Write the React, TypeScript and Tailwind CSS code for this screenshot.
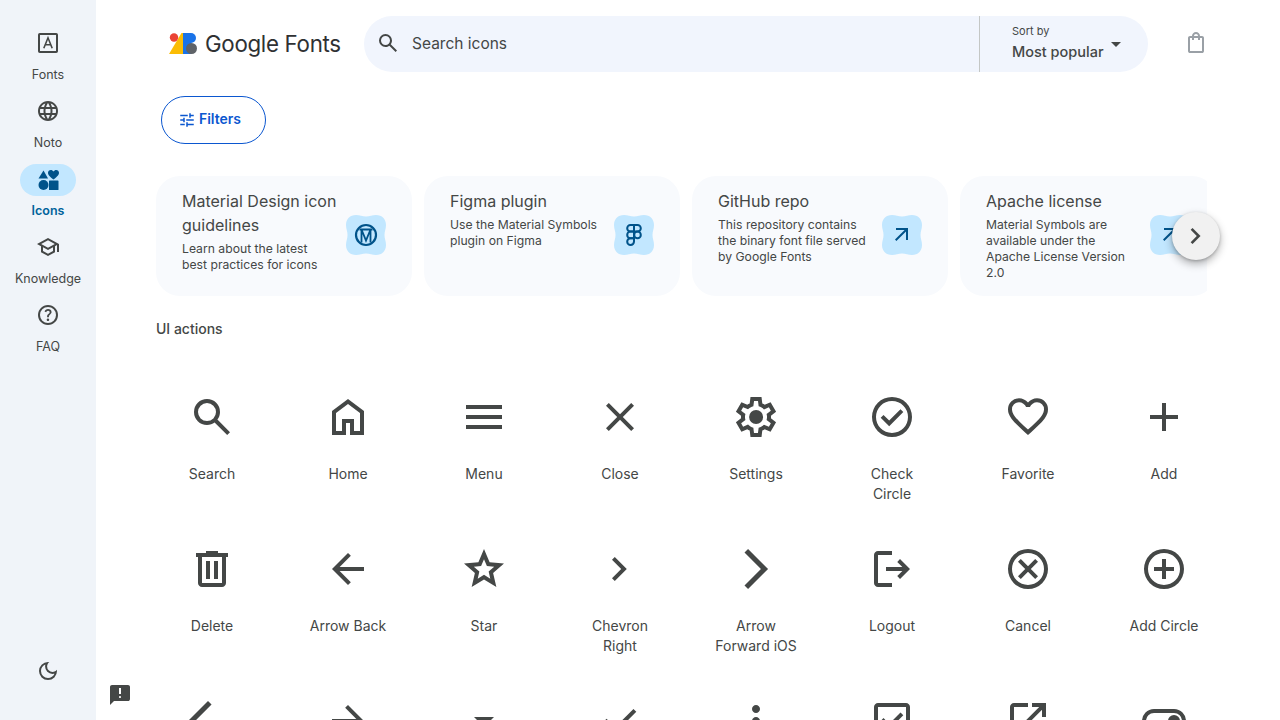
import React from "react";

const paths: Record<string, string> = {
  search: "M784-120 532-372q-30 24-69 38t-83 14q-109 0-184.5-75.5T120-580q0-109 75.5-184.5T380-840q109 0 184.5 75.5T640-580q0 44-14 83t-38 69l252 252-56 56ZM380-400q75 0 127.5-52.5T560-580q0-75-52.5-127.5T380-760q-75 0-127.5 52.5T200-580q0 75 52.5 127.5T380-400Z",
  home: "M240-200h120v-240h240v240h120v-360L480-740 240-560v360Zm-80 80v-480l320-240 320 240v480H520v-240h-80v240H160Z",
  menu: "M120-240v-80h720v80H120Zm0-200v-80h720v80H120Zm0-200v-80h720v80H120Z",
  close: "m256-200-56-56 224-224-224-224 56-56 224 224 224-224 56 56-224 224 224 224-56 56-224-224-224 224Z",
  settings: "m370-80-16-128q-13-5-24.5-12T307-235l-119 50L78-375l103-78q-1-7-1-13.5v-27q0-6.5 1-13.5L78-585l110-190 119 50q11-8 23-15t24-12l16-128h220l16 128q13 5 24.5 12t22.5 15l119-50 110 190-103 78q1 7 1 13.5v27q0 6.5-2 13.5l103 78-110 190-118-50q-11 8-23 15t-24 12L590-80H370Zm70-80h79l14-106q31-8 57.5-23.5T639-327l99 41 39-68-86-65q5-14 7-29.5t2-31.5q0-16-2-31.5t-7-29.5l86-65-39-68-99 42q-22-23-48.5-38.5T533-694l-13-106h-79l-14 106q-31 8-57.5 23.5T321-633l-99-41-39 68 86 64q-5 15-7 30t-2 32q0 16 2 31t7 30l-86 65 39 68 99-42q22 23 48.5 38.5T427-266l13 106Zm42-180q58 0 99-41t41-99q0-58-41-99t-99-41q-59 0-99.5 41T342-480q0 58 40.5 99t99.5 41Z",
  checkCircle: "m424-296 282-282-56-56-226 226-114-114-56 56 170 170Zm56 216q-83 0-156-31.5T197-197q-54-54-85.5-127T80-480q0-83 31.5-156T197-763q54-54 127-85.5T480-880q83 0 156 31.5T763-763q54 54 85.5 127T880-480q0 83-31.5 156T763-197q-54 54-127 85.5T480-80Zm0-80q134 0 227-93t93-227q0-134-93-227t-227-93q-134 0-227 93t-93 227q0 134 93 227t227 93Z",
  favorite: "m480-120-58-52q-101-91-167-157T150-447.5Q111-500 95.5-544T80-634q0-94 63-157t157-63q52 0 99 22t81 62q34-40 81-62t99-22q94 0 157 63t63 157q0 46-15.5 90T810-447.5Q771-395 705-329T538-172l-58 52Zm0-108q96-86 158-147.5t98-107q36-45.5 50-81t14-70.5q0-60-40-100t-100-40q-47 0-87 26.5T518-680h-76q-15-41-55-67.5T300-774q-60 0-100 40t-40 100q0 35 14 70.5t50 81q36 45.5 98 107T480-228Z",
  add: "M440-440H200v-80h240v-240h80v240h240v80H520v240h-80v-240Z",
  delete: "M280-120q-33 0-56.5-23.5T200-200v-520h-40v-80h200v-40h240v40h200v80h-40v520q0 33-23.5 56.5T680-120H280Zm400-600H280v520h400v-520ZM360-280h80v-360h-80v360Zm160 0h80v-360h-80v360Z",
  arrowBack: "m313-440 224 224-57 56-320-320 320-320 57 56-224 224h487v80H313Z",
  star: "m354-287 126-76 126 77-33-144 111-96-146-13-58-136-58 135-146 13 111 97-33 143ZM233-120l65-281L80-590l288-25 112-265 112 265 288 25-218 189 65 281-247-149-247 149Z",
  chevronRight: "M504-480 320-664l56-56 240 240-240 240-56-56 184-184Z",
  arrowForwardIos: "m321-80-71-71 329-329-329-329 71-71 400 400L321-80Z",
  logout: "M200-120q-33 0-56.5-23.5T120-200v-560q0-33 23.5-56.5T200-840h280v80H200v560h280v80H200Zm440-160-55-58 102-102H360v-80h327L585-622l55-58 200 200-200 200Z",
  cancel: "m336-280 144-144 144 144 56-56-144-144 144-144-56-56-144 144-144-144-56 56 144 144-144 144 56 56ZM480-80q-83 0-156-31.5T197-197q-54-54-85.5-127T80-480q0-83 31.5-156T197-763q54-54 127-85.5T480-880q83 0 156 31.5T763-763q54 54 85.5 127T880-480q0 83-31.5 156T763-197q-54 54-127 85.5T480-80Zm0-80q134 0 227-93t93-227q0-134-93-227t-227-93q-134 0-227 93t-93 227q0 134 93 227t227 93Z",
  addCircle: "M440-280h80v-160h160v-80H520v-160h-80v160H280v80h160v160Zm40 200q-83 0-156-31.5T197-197q-54-54-85.5-127T80-480q0-83 31.5-156T197-763q54-54 127-85.5T480-880q83 0 156 31.5T763-763q54 54 85.5 127T880-480q0 83-31.5 156T763-197q-54 54-127 85.5T480-80Zm0-80q134 0 227-93t93-227q0-134-93-227t-227-93q-134 0-227 93t-93 227q0 134 93 227t227 93Z",
  arrowBackIos: "M400-80 0-480l400-400 71 71-329 329 329 329-71 71Z",
  arrowForward: "M647-440H160v-80h487L423-744l57-56 320 320-320 320-57-56 224-224Z",
  arrowDrop: "M480-360 280-560h400L480-360Z",
  done: "M382-240 154-468l57-57 171 171 367-367 57 57-424 424Z",
  moreVert: "M480-160q-33 0-56.5-23.5T400-240q0-33 23.5-56.5T480-320q33 0 56.5 23.5T560-240q0 33-23.5 56.5T480-160Zm0-240q-33 0-56.5-23.5T400-480q0-33 23.5-56.5T480-560q33 0 56.5 23.5T560-480q0 33-23.5 56.5T480-400Zm0-240q-33 0-56.5-23.5T400-720q0-33 23.5-56.5T480-800q33 0 56.5 23.5T560-720q0 33-23.5 56.5T480-640Z",
  checkBox: "m424-312 282-282-56-56-226 226-114-114-56 56 170 170ZM200-120q-33 0-56.5-23.5T120-200v-560q0-33 23.5-56.5T200-840h560q33 0 56.5 23.5T840-760v560q0 33-23.5 56.5T760-120H200Zm0-80h560v-560H200v560Z",
  openInNew: "M200-120q-33 0-56.5-23.5T120-200v-560q0-33 23.5-56.5T200-840h280v80H200v560h560v-280h80v280q0 33-23.5 56.5T760-120H200Zm188-212-56-56 372-372H560v-80h280v280h-80v-144L388-332Z",
  toggleOn: "M280-240q-100 0-170-70T40-480q0-100 70-170t170-70h400q100 0 170 70t70 170q0 100-70 170t-170 70H280Zm0-80h400q66 0 113-47t47-113q0-66-47-113t-113-47H280q-66 0-113 47t-47 113q0 66 47 113t113 47Zm400-40q50 0 85-35t35-85q0-50-35-85t-85-35q-50 0-85 35t-35 85q0 50 35 85t85 35Z",
  language: "M480-80q-82 0-155-31.5t-127.5-86Q143-252 111.5-325T80-480q0-83 31.5-155.5t86-127Q252-817 325-848.5T480-880q83 0 155.5 31.5t127 86q54.5 54.5 86 127T880-480q0 82-31.5 155t-86 127.5q-54.5 54.5-127 86T480-80Zm0-82q26-36 45-75t31-83H404q12 44 31 83t45 75Zm-104-16q-18-33-31.5-68.5T322-320H204q29 50 72.5 87t99.5 55Zm208 0q56-18 99.5-55t72.5-87H638q-9 38-22.5 73.5T584-178ZM170-400h136q-3-20-4.5-39.5T300-480q0-21 1.5-40.5T306-560H170q-5 20-7.5 39.5T160-480q0 21 2.5 40.5T170-400Zm216 0h188q3-20 4.5-39.5T580-480q0-21-1.5-40.5T574-560H386q-3 20-4.5 39.5T380-480q0 21 1.5 40.5T386-400Zm268 0h136q5-20 7.5-39.5T800-480q0-21-2.5-40.5T790-560H654q3 20 4.5 39.5T660-480q0 21-1.5 40.5T654-400Zm-16-240h118q-29-50-72.5-87T584-782q18 33 31.5 68.5T638-640Zm-234 0h152q-12-44-31-83t-45-75q-26 36-45 75t-31 83Zm-200 0h118q9-38 22.5-73.5T376-782q-56 18-99.5 55T204-640Z",
  school: "M480-120 200-272v-240L40-600l440-240 440 240v320h-80v-276l-80 44v240L480-120Zm0-332 274-148-274-148-274 148 274 148Zm0 241 200-108v-151L480-360 280-470v151l200 108Z",
  help: "M478-240q21 0 35.5-14.5T528-290q0-21-14.5-35.5T478-340q-21 0-35.5 14.5T428-290q0 21 14.5 35.5T478-240Zm-36-154h74q0-33 7.5-52t42.5-52q26-26 41-49.5t15-56.5q0-56-41-86t-97-30q-57 0-92.5 30T342-618l66 26q5-18 22.5-39t53.5-21q32 0 48 17.5t16 38.5q0 20-12 37.5T506-526q-44 39-54 59t-10 73Zm38 314q-83 0-156-31.5T197-197q-54-54-85.5-127T80-480q0-83 31.5-156T197-763q54-54 127-85.5T480-880q83 0 156 31.5T763-763q54 54 85.5 127T880-480q0 83-31.5 156T763-197q-54 54-127 85.5T480-80Zm0-80q134 0 227-93t93-227q0-134-93-227t-227-93q-134 0-227 93t-93 227q0 134 93 227t227 93Z",
  darkMode: "M480-120q-150 0-255-105T120-480q0-150 105-255t255-105q14 0 27.5 1t26.5 3q-41 29-65.5 75.5T444-660q0 90 63 153t153 63q55 0 101-24.5t75-65.5q2 13 3 26.5t1 27.5q0 150-105 255T480-120Zm0-80q88 0 158-48.5T740-375q-20 5-40 8t-40 3q-123 0-209.5-86.5T364-660q0-20 3-40t8-40q-78 32-126.5 102T200-480q0 116 82 198t198 82Z",
  feedback: "M480-360q17 0 28.5-11.5T520-400q0-17-11.5-28.5T480-440q-17 0-28.5 11.5T440-400q0 17 11.5 28.5T480-360Zm-40-160h80v-240h-80v240ZM80-80v-720q0-33 23.5-56.5T160-880h640q33 0 56.5 23.5T880-800v480q0 33-23.5 56.5T800-240H240L80-80Z",
  tune: "M440-120v-240h80v80h320v80H520v80h-80Zm-320-80v-80h240v80H120Zm160-160v-80H120v-80h160v-80h80v240h-80Zm160-80v-80h400v80H440Zm160-160v-240h80v80h160v80H680v80h-80Zm-480-80v-80h400v80H120Z",
  bag: "M240-80q-33 0-56.5-23.5T160-160v-520q0-33 23.5-56.5T240-760h80q0-66 47-113t113-47q66 0 113 47t47 113h80q33 0 56.5 23.5T800-680v520q0 33-23.5 56.5T720-80H240Zm0-80h480v-520h-80v80h-80v-80H400v80h-80v-80h-80v520Zm160-600h160q0-33-23.5-56.5T480-840q-33 0-56.5 23.5T400-760Z",
  northEast: "m256-240-56-56 384-384H240v-80h480v480h-80v-344L256-240Z",
};

const Icon = ({ name, className }: { name: string; className?: string }) => (
  <svg viewBox="0 -960 960 960" fill="currentColor" className={className}>
    <path d={paths[name]} />
  </svg>
);

const navItems = [
  { label: "Fonts", icon: "fonts" },
  { label: "Noto", icon: "language" },
  { label: "Icons", icon: "interests" },
  { label: "Knowledge", icon: "school" },
  { label: "FAQ", icon: "help" },
];

const icons = [
  { label: "Search", icon: "search" },
  { label: "Home", icon: "home" },
  { label: "Menu", icon: "menu" },
  { label: "Close", icon: "close" },
  { label: "Settings", icon: "settings" },
  { label: "Check Circle", icon: "checkCircle" },
  { label: "Favorite", icon: "favorite" },
  { label: "Add", icon: "add" },
  { label: "Delete", icon: "delete" },
  { label: "Arrow Back", icon: "arrowBack" },
  { label: "Star", icon: "star" },
  { label: "Chevron Right", icon: "chevronRight" },
  { label: "Arrow Forward iOS", icon: "arrowForwardIos" },
  { label: "Logout", icon: "logout" },
  { label: "Cancel", icon: "cancel" },
  { label: "Add Circle", icon: "addCircle" },
  { label: "", icon: "arrowBackIos" },
  { label: "", icon: "arrowForward" },
  { label: "", icon: "arrowDrop" },
  { label: "", icon: "done" },
  { label: "", icon: "moreVert" },
  { label: "", icon: "checkBox" },
  { label: "", icon: "openInNew" },
  { label: "", icon: "toggleOn" },
];

const cards = [
  {
    title: "Material Design icon guidelines",
    text: "Learn about the latest best practices for icons",
    badge: "material",
  },
  {
    title: "Figma plugin",
    text: "Use the Material Symbols plugin on Figma",
    badge: "figma",
  },
  {
    title: "GitHub repo",
    text: "This repository contains the binary font file served by Google Fonts",
    badge: "arrow",
  },
  {
    title: "Apache license",
    text: "Material Symbols are available under the Apache License Version 2.0",
    badge: "arrow",
  },
];

const Badge = ({ kind }: { kind: string }) => (
  <div className="relative w-10 h-10 shrink-0 text-[#00538a]">
    <svg viewBox="0 0 40 40" className="absolute inset-0 w-10 h-10" fill="#c2e7ff">
      <path d="M10 0C14 0 16 1.500 20 1.500S26 0 30 0C36 0 40 4 40 10C40 14 38.500 16 38.500 20S40 26 40 30C40 36 36 40 30 40C26 40 24 38.500 20 38.500S14 40 10 40C4 40 0 36 0 30C0 26 1.500 24 1.500 20S0 14 0 10C0 4 4 0 10 0Z" />
    </svg>
    {kind === "arrow" && <Icon name="northEast" className="absolute left-2 top-2 w-6 h-6" />}
    {kind === "material" && (
      <svg viewBox="0 0 24 24" className="absolute left-2 top-2 w-6 h-6" fill="none" stroke="currentColor" strokeWidth="2.200">
        <circle cx="12" cy="12" r="10" />
        <path d="M5.500 6.500h13M7.500 6.500V19.500M16.500 6.500V19.500M7.500 6.500l4.500 11 4.500-11" strokeWidth="1.800" />
      </svg>
    )}
    {kind === "figma" && (
      <svg viewBox="0 0 24 24" className="absolute left-2 top-2 w-6 h-6" fill="none" stroke="currentColor" strokeWidth="2">
        <path d="M12 2H8.500a3.300 3.300 0 0 0 0 6.600H12V2ZM12 2h3.500a3.300 3.300 0 0 1 0 6.600H12V2Z" />
        <path d="M12 8.600H8.500a3.300 3.300 0 0 0 0 6.600H12V8.600Z" />
        <circle cx="15.500" cy="11.900" r="3.300" />
        <path d="M8.500 15.200H12v3.400a3.400 3.400 0 1 1-3.500-3.400Z" />
      </svg>
    )}
  </div>
);

const Logo = () => (
  <svg viewBox="0 0 28 24" className="w-7 h-6 shrink-0 -mt-[2px]">
    <path d="M0 23 L12.500 2 L14 2 L14 23 Z" fill="#fbbc04" />
    <circle cx="5" cy="6.500" r="4.200" fill="#ea4335" />
    <path d="M14 2 h8 a5 5 0 0 1 0 10 h-8 Z" fill="#1a73e8" />
    <path d="M14 12 h8 v11 h-8 Z" fill="#1a73e8" />
    <circle cx="22.500" cy="17.500" r="5.500" fill="#5f6368" />
  </svg>
);

const NavIcon = ({ icon }: { icon: string }) => {
  if (icon === "fonts") {
    return (
      <svg viewBox="0 0 24 24" className="w-6 h-6" fill="none" stroke="currentColor">
        <rect x="3" y="3" width="18" height="18" rx="0.800" strokeWidth="2" />
        <path d="M7.800 17.200 12 6.800l4.200 10.400M9.200 13.800h5.600" strokeWidth="1.600" />
      </svg>
    );
  }
  if (icon === "interests") {
    return (
      <svg viewBox="0 0 24 24" className="w-6 h-6" fill="#00538a">
        <path d="M7.500 2.500 12 10.500H2.500Z" />
        <path d="M17.500 11.500c-4-3-5.500-4.800-5.500-6.700C12 3.200 13.200 2 14.800 2c1.100 0 2.100.6 2.700 1.500C18.100 2.600 19.100 2 20.200 2 21.800 2 23 3.200 23 4.800c0 1.900-1.500 3.700-5.500 6.700Z" />
        <circle cx="7.500" cy="17" r="5" />
        <rect x="13" y="12.500" width="9.500" height="9.500" rx="0.600" />
      </svg>
    );
  }
  return <Icon name={icon} className="w-6 h-6" />;
};

export default function App() {
  return (
    <div className="flex h-screen overflow-hidden bg-white text-[#444746] font-['Inter','Noto_Sans',sans-serif]">
      {/* Left rail */}
      <aside className="w-24 shrink-0 bg-[#f0f4f9] flex flex-col items-center pt-[27px] pb-[37px]">
        <nav className="flex flex-col">
          {navItems.map((item) => {
            const active = item.label === "Icons";
            return (
              <div key={item.label} className="h-[68px] flex flex-col items-center">
                <div className={`w-14 h-8 rounded-full flex items-center justify-center ${active ? "bg-[#c2e7ff] mt-[1px] -mb-[1px]" : ""}`}>
                  <NavIcon icon={item.icon} />
                </div>
                <span className={`text-[12.5px] leading-4 mt-[8px] ${active ? "text-[#00639b] font-semibold" : "text-[#444746]"}`}>
                  {item.label}
                </span>
              </div>
            );
          })}
        </nav>
        <Icon name="darkMode" className="w-6 h-6 mt-auto" />
      </aside>

      {/* Main */}
      <main className="relative flex-1 min-w-0 pl-[60px]">
        <Icon name="feedback" className="absolute left-3 top-[683px] w-6 h-6" />

        <header className="flex items-center h-14 mt-4">
          <div className="flex items-center w-[208px] pl-[13px] shrink-0 gap-[8px]">
            <Logo />
            <span className="text-[22.3px] leading-none text-[#2f3133] tracking-[-0.3px] whitespace-nowrap">Google Fonts</span>
          </div>
          <div className="w-[784px] h-14 rounded-full bg-[#f1f5fd] flex items-center shrink-0">
            <Icon name="search" className="w-6 h-6 ml-3 -mt-[2px]" />
            <span className="ml-3 text-[15.5px] text-[#444746] flex-1">Search icons</span>
            <div className="w-[169px] h-14 border-l border-[#c4c7c5] pl-8 flex items-center">
              <div className="-mt-[3px]">
                <div className="text-[11px] leading-4">Sort by</div>
                <div className="text-[14.5px] leading-5 font-medium mt-[3px]">Most popular</div>
              </div>
              <Icon name="arrowDrop" className="w-6 h-6" />
            </div>
          </div>
          <Icon name="bag" className="w-6 h-6 ml-9 -mt-[2px] text-[#9aa0a6]" />
        </header>

        <button className="ml-[5px] mt-6 w-[105px] h-12 pr-2 rounded-full border border-[#0b57d0] flex items-center justify-center gap-[3px] text-[#0b57d0] text-sm font-semibold">
          <Icon name="tune" className="w-[18px] h-[18px]" />
          <span className="-mt-[2px]">Filters</span>
        </button>

        <div className="relative mt-8 w-[1051px]">
          <div className="flex gap-3 overflow-hidden">
            {cards.map((card) => (
              <div key={card.title} className="w-64 h-[120px] shrink-0 rounded-3xl bg-[#f8fafd] pl-[26px] pt-[13px] flex">
                <div className="w-[164px] shrink-0">
                  <div className="max-w-[160px] text-base leading-6 text-[#444746]">{card.title}</div>
                  <div className="max-w-[150px] text-[12.2px] leading-4 text-[#444746] mt-[4px]">{card.text}</div>
                </div>
                <div className="mt-[26px]"><Badge kind={card.badge} /></div>
              </div>
            ))}
          </div>
          <div className="absolute left-[1016px] top-[36px] w-12 h-12 rounded-full bg-[#f1f1f1] shadow-[0_4px_8px_rgba(0,0,0,0.3),0_1px_3px_rgba(0,0,0,0.2)] flex items-center justify-center">
            <Icon name="chevronRight" className="w-8 h-8" />
          </div>
        </div>

        <h2 className="mt-[23px] text-sm leading-5 font-medium text-[#444746]">UI actions</h2>

        <div className="grid grid-cols-[repeat(8,136px)] auto-rows-[152px] -ml-3 mt-[54px]">
          {icons.map((item) => (
            <div key={item.icon} className="flex flex-col items-center text-center">
              <Icon name={item.icon} className="w-12 h-12" />
              {item.label && (
                <span className="mt-[23px] w-[84px] text-sm leading-5 text-[#444746] text-balance">{item.label}</span>
              )}
            </div>
          ))}
        </div>
      </main>
    </div>
  );
}
